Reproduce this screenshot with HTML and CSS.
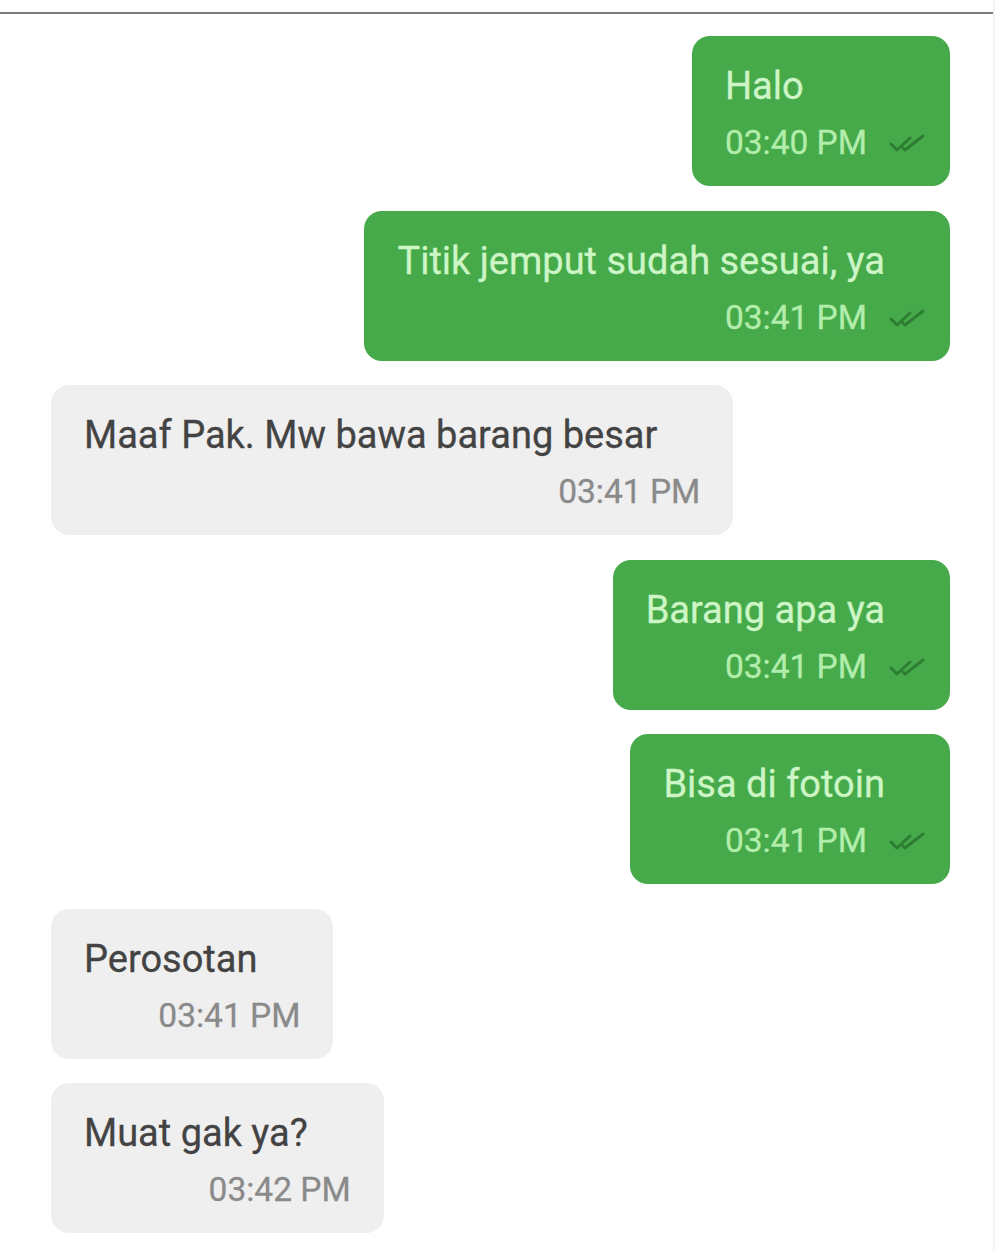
FILE: index.html
```html
<!DOCTYPE html>
<html lang="en">
<head>
<meta charset="UTF-8">
<title>Chat</title>
<link rel="stylesheet" href="styles.css">
</head>
<body>
<div class="topline"></div>
<div class="chat">
    <div class="msg sent">
        <div class="text">Halo</div>
        <div class="meta"><span class="time">03:40 PM</span><svg class="ticks" viewBox="0 0 40 24"><path d="M3 13 L9 19 L22 7" /><path d="M15 17 L17 19 L35 5" /></svg></div>
    </div>
    <div class="msg sent">
        <div class="text">Titik jemput sudah sesuai, ya</div>
        <div class="meta"><span class="time">03:41 PM</span><svg class="ticks" viewBox="0 0 40 24"><path d="M3 13 L9 19 L22 7" /><path d="M15 17 L17 19 L35 5" /></svg></div>
    </div>
    <div class="msg received">
        <div class="text">Maaf Pak. Mw bawa barang besar</div>
        <div class="meta"><span class="time">03:41 PM</span></div>
    </div>
    <div class="msg sent">
        <div class="text">Barang apa ya</div>
        <div class="meta"><span class="time">03:41 PM</span><svg class="ticks" viewBox="0 0 40 24"><path d="M3 13 L9 19 L22 7" /><path d="M15 17 L17 19 L35 5" /></svg></div>
    </div>
    <div class="msg sent">
        <div class="text">Bisa di fotoin</div>
        <div class="meta"><span class="time">03:41 PM</span><svg class="ticks" viewBox="0 0 40 24"><path d="M3 13 L9 19 L22 7" /><path d="M15 17 L17 19 L35 5" /></svg></div>
    </div>
    <div class="msg received">
        <div class="text">Perosotan</div>
        <div class="meta"><span class="time">03:41 PM</span></div>
    </div>
    <div class="msg received">
        <div class="text">Muat gak ya?</div>
        <div class="meta"><span class="time">03:42 PM</span></div>
    </div>
</div>
</body>
</html>
```
FILE: styles.css
```css
body {
    margin: 0;
    background: #ffffff;
    font-family: Roboto, 'Noto Sans', sans-serif;
    height: 1250px;
    overflow: hidden;
    border-right: 2px solid #f3f3f3;
    box-sizing: border-box;
    width: 995px;
}
.topline {
    margin-top: 12px;
    height: 2px;
    background: #7a7a7a;
    width: 1000px;
}
.chat {
    display: flex;
    flex-direction: column;
    gap: 24.5px;
    padding: 22px 0 0 51px;
    width: 899px;
}
.msg {
    box-sizing: border-box;
    height: 150px;
    border-radius: 18px;
    padding: 28px 33px 0 33px;
    display: flex;
    flex-direction: column;
}
.msg .text {
    font-size: 38px;
    line-height: 44px;
    margin-right: 43px;
    white-space: nowrap;
    -webkit-text-stroke: 0.3px currentColor;
}
.msg .meta {
    display: flex;
    justify-content: flex-end;
    align-items: center;
    margin-top: 15px;
    height: 40px;
}
.time {
    font-size: 33.5px;
    line-height: 40px;
    -webkit-text-stroke: 0.3px currentColor;
}
.sent {
    align-self: flex-end;
    background: #46aa4b;
    padding-right: 22px;
}
.sent .text {
    color: #cdf5c6;
}
.sent .time {
    color: #b3edab;
}
.ticks {
    width: 40px;
    height: 24px;
    margin-left: 21px;
    fill: none;
    stroke: #2d7d33;
    stroke-width: 3;
    stroke-linecap: round;
    stroke-linejoin: round;
}
.received {
    align-self: flex-start;
    background: #efefef;
}
.received .text {
    color: #434343;
}
.received .time {
    color: #8a8a8a;
}
```
